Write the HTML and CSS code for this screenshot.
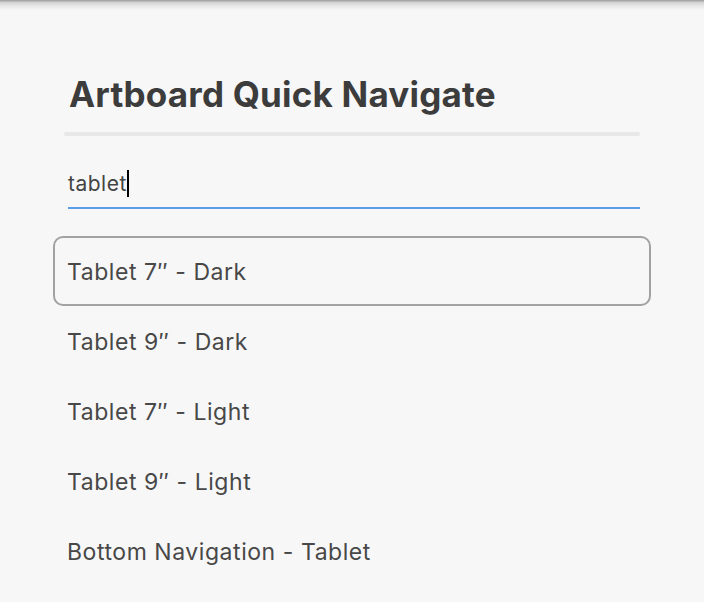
FILE: index.html
```html
<!DOCTYPE html>
<html>
<head>
<meta charset="utf-8">
<link rel="stylesheet" href="styles.css">
</head>
<body>
<div class="topbar"></div>
<main class="panel">
  <h1 class="title">Artboard Quick Navigate</h1>
  <div class="divider"></div>
  <div class="search"><span class="query">tablet</span><span class="caret"></span></div>
  <ul class="results">
    <li class="item selected">Tablet 7″ - Dark</li>
    <li class="item">Tablet 9″ - Dark</li>
    <li class="item">Tablet 7″ - Light</li>
    <li class="item">Tablet 9″ - Light</li>
    <li class="item">Bottom Navigation - Tablet</li>
  </ul>
</main>
</body>
</html>
```
FILE: styles.css
```css
html, body {
  margin: 0;
  padding: 0;
  background: #f7f7f7;
  font-family: Inter, "Liberation Sans", Arial, sans-serif;
  color: #484848;
}
.topbar {
  height: 10px;
  background: linear-gradient(#a6a6a6 0, #a6a6a6 1px, #cfcfcf 2px, #e3e3e3 5px, #f7f7f7 10px);
}
.panel {
  padding: 62px 0 0 53px;
  width: 598px;
}
.title {
  margin: 0 0 0 16px;
  font-size: 35px;
  font-weight: bold;
  letter-spacing: 0.2px;
  color: #3c3c3c;
  line-height: 44px;
}
.divider {
  margin: 16px 0 0 11px;
  width: 576px;
  height: 4px;
  border-radius: 2px;
  background: #e8e8e8;
}
.search {
  margin: 34px 11px 0 15px;
  height: 37px;
  border-bottom: 2px solid #5b9ee8;
  display: flex;
  align-items: flex-start;
  font-size: 21px;
  letter-spacing: 0.5px;
}
.query {
  line-height: 28px;
  color: #444;
}
.caret {
  width: 2px;
  height: 27px;
  background: #000;
  margin-top: 0;
}
.results {
  list-style: none;
  margin: 27px 0 0 0;
  padding: 0;
}
.item {
  height: 65px;
  border: 2px solid transparent;
  border-radius: 10px;
  padding: 1px 12px 0;
  display: flex;
  align-items: center;
  font-size: 23px;
  letter-spacing: 0.55px;
  color: #484848;
}
.item.selected {
  border-color: #a2a2a2;
}
```
